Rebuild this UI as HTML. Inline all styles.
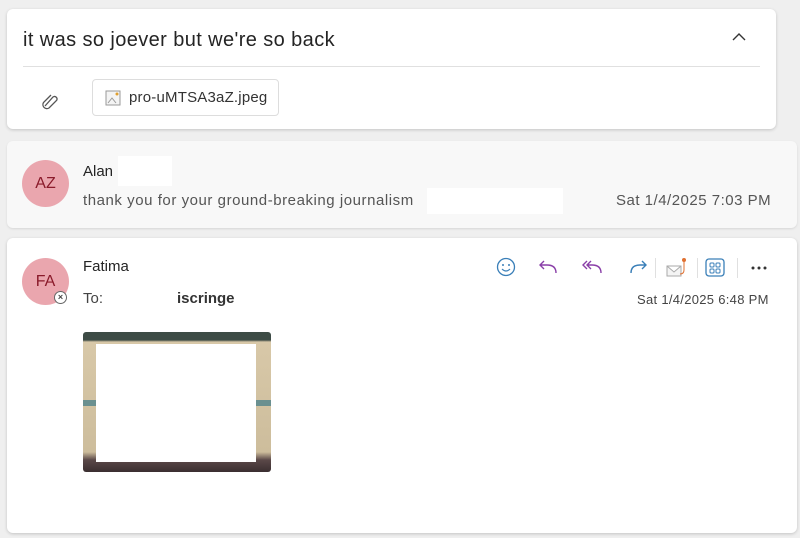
<!DOCTYPE html>
<html><head><style>
body{margin:0;width:800px;height:538px;background:#efefef;font-family:"Liberation Sans",sans-serif;position:relative;overflow:hidden;color:#242424}
.c{position:absolute;background:#fff;border-radius:6px;box-shadow:0 1px 3px rgba(0,0,0,.18)}
.a{position:absolute}
.av{position:absolute;width:47px;height:47px;border-radius:50%;background:#eaa6ae;color:#8a1a2a;font-size:16px;text-align:center;line-height:47px}
</style></head><body>
<div class="c" style="left:7px;top:9px;width:769px;height:120px">
 <div class="a" style="left:16px;top:20px;font-size:20px;letter-spacing:0.4px;color:#242424">it was so joever but we're so back</div>
 <svg class="a" style="left:724px;top:22px" width="16" height="12"><path d="M2 9 L8 3 L14 9" fill="none" stroke="#333" stroke-width="1.4"/></svg>
 <div class="a" style="left:16px;top:57px;width:737px;height:1px;background:#e0e0e0"></div>
 <svg class="a" style="left:33px;top:82px" width="20" height="20"><path d="M5 15 L13 6 a2.5 2.5 0 0 1 3.5 3.5 L9 17 a4 4 0 0 1 -5.5 -5.5 L11 4" fill="none" stroke="#555" stroke-width="1.3"/></svg>
 <div class="a" style="left:85px;top:70px;width:187px;height:37px;border:1px solid #ddd;border-radius:4px;box-sizing:border-box">
  <svg class="a" style="left:12px;top:10px" width="16" height="16"><rect x="1" y="1" width="14" height="14" fill="#f4f4f4" stroke="#999"/><circle cx="12" cy="4" r="1.5" fill="#e0a030"/><path d="M3 13 L7 8 L11 13" fill="none" stroke="#999"/></svg>
  <div class="a" style="left:36px;top:9px;font-size:15px;letter-spacing:0.2px;color:#333">pro-uMTSA3aZ.jpeg</div>
 </div>
</div>
<div class="c" style="left:7px;top:141px;width:790px;height:87px;background:#f8f8f8;box-shadow:0 1px 2px rgba(0,0,0,.1)">
 <div class="av" style="left:15px;top:19px">AZ</div>
 <div class="a" style="left:76px;top:22px;font-size:15px">Alan</div>
 <div class="a" style="left:111px;top:15px;width:54px;height:30px;background:#fff"></div>
 <div class="a" style="left:76px;top:51px;font-size:15px;letter-spacing:0.55px;color:#555">thank you for your ground-breaking journalism</div>
 <div class="a" style="left:420px;top:47px;width:136px;height:26px;background:#fff"></div>
 <div class="a" style="left:609px;top:51px;font-size:15px;letter-spacing:0.5px;color:#555">Sat 1/4/2025 7:03 PM</div>
</div>
<div class="c" style="left:7px;top:238px;width:790px;height:295px">
 <div class="av" style="left:15px;top:20px">FA</div>
 <div class="a" style="left:47px;top:53px;width:13px;height:13px;border-radius:50%;background:#fff;border:1.5px solid #666;box-sizing:border-box;font-size:9px;line-height:10px;text-align:center;color:#444;font-weight:bold">×</div>
 <div class="a" style="left:76px;top:20px;font-size:15px">Fatima</div>
 <div class="a" style="left:76px;top:52px;font-size:15px;color:#444">To:</div>
 <div class="a" style="left:170px;top:52px;font-size:15px;font-weight:bold;color:#333">iscringe</div>
 <div class="a" style="left:630px;top:54px;font-size:13px;letter-spacing:0.3px;color:#444">Sat 1/4/2025 6:48 PM</div>
 <svg class="a" style="left:488px;top:18px" width="280" height="22">
  <circle cx="11" cy="11" r="8.5" fill="none" stroke="#3a7fb8" stroke-width="1.3"/><circle cx="8" cy="9" r="1" fill="#3a7fb8"/><circle cx="14" cy="9" r="1" fill="#3a7fb8"/><path d="M7 13 Q11 17 15 13" fill="none" stroke="#3a7fb8" stroke-width="1.2"/>
  <path d="M61 17 Q61 9 52 9 L45 9 M49 5 L45 9 L49 13" fill="none" stroke="#8a3fa8" stroke-width="1.4"/>
  <path d="M106 17 Q106 9 97 9 L92 9 M96 5 L92 9 L96 13 M92 5 L88 9 L92 13" fill="none" stroke="#8a3fa8" stroke-width="1.4"/>
  <path d="M136 17 Q136 9 145 9 L151 9 M147 5 L151 9 L147 13" fill="none" stroke="#3a7fb8" stroke-width="1.4"/>
  <rect x="160" y="2" width="1" height="20" fill="#e0e0e0"/>
  <path d="M172 10 L186 10 L186 20 L172 20 Z M172 10 L179 16 L186 10" fill="#f4f4f4" stroke="#aaa"/><circle cx="189" cy="4" r="2" fill="#e07030"/><path d="M189 6 L189 14 Q189 18 185 18" fill="none" stroke="#e07030"/>
  <rect x="202" y="2" width="1" height="20" fill="#e0e0e0"/>
  <rect x="211" y="3" width="18" height="17" rx="3" fill="none" stroke="#3a7fb8" stroke-width="1.3"/><rect x="215" y="7" width="4" height="4" rx="1" fill="none" stroke="#3a7fb8"/><rect x="221" y="7" width="4" height="4" rx="1" fill="none" stroke="#3a7fb8"/><rect x="215" y="13" width="4" height="4" rx="1" fill="none" stroke="#3a7fb8"/><rect x="221" y="13" width="4" height="4" rx="1" fill="none" stroke="#3a7fb8"/>
  <rect x="242" y="2" width="1" height="20" fill="#e0e0e0"/>
  <circle cx="258" cy="12" r="1.5" fill="#333"/><circle cx="264" cy="12" r="1.5" fill="#333"/><circle cx="270" cy="12" r="1.5" fill="#333"/>
 </svg>
 <div class="a" style="left:76px;top:94px;width:188px;height:140px;border-radius:3px;background:linear-gradient(#3d4b45 0,#3d4b45 8px,#d8c8a8 10px,#cdbd9c 120px,#5a4848 128px,#3a2e30 140px)">
  <div class="a" style="left:0;top:68px;width:188px;height:6px;background:#6a9090"></div>
  <div class="a" style="left:13px;top:12px;width:160px;height:118px;background:#fff"></div>
 </div>
</div>
</body></html>
